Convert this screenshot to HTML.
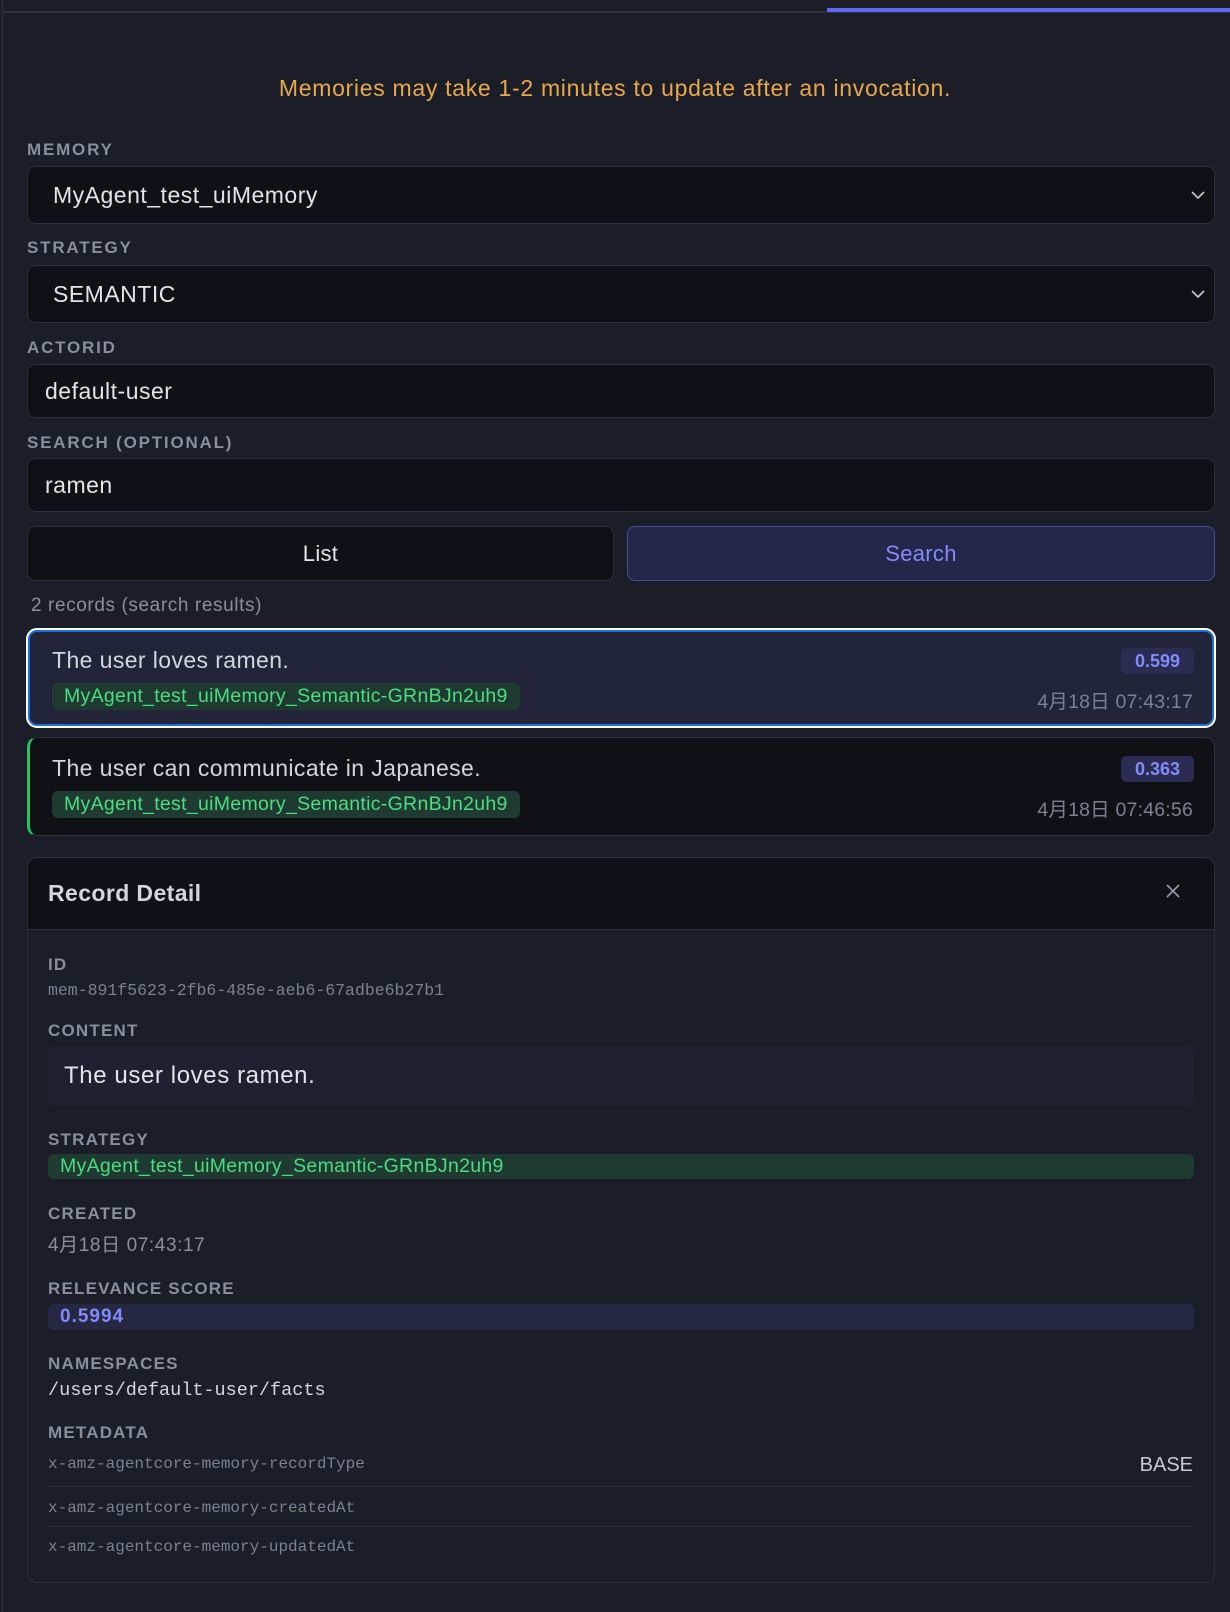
<!DOCTYPE html>
<html><head><meta charset="utf-8"><style>
*{box-sizing:border-box;margin:0;padding:0}
body{width:1230px;height:1612px;background:#1b1d29;font-family:"Liberation Sans","Noto Sans CJK JP",sans-serif;color:#d4d6de;position:relative;overflow:hidden}
.a{position:absolute;white-space:nowrap}
.lbl{position:absolute;left:27px;font-size:17px;font-weight:bold;letter-spacing:1.8px;color:#8b8e9c}
.box{position:absolute;left:27px;width:1188px;background:#0f1117;border:1px solid #2c2f3c;border-radius:8px;font-size:23px;letter-spacing:.5px;color:#e2e4ea;padding-left:17px;display:flex;align-items:center}
.chev{position:absolute;right:8px;top:50%;margin-top:-6px}
.dl{position:absolute;left:48px;font-size:17px;font-weight:bold;letter-spacing:1.2px;color:#8b8e9c}
.mono{font-family:"Liberation Mono","DejaVu Sans Mono",monospace}
.g{background:#1f3a30;color:#4ade80;border-radius:6px;letter-spacing:.3px}
.s{background:#2a2c52;color:#818cf8;border-radius:5px;font-weight:bold}
</style></head><body>
<div class="a" style="left:2px;top:0;width:1px;height:1612px;background:#2c2f3c"></div>
<div class="a" style="left:2px;top:11px;width:1228px;height:2px;background:#2c2f3c"></div>
<div class="a" style="left:827px;top:8px;width:403px;height:4px;background:#6366f1"></div>
<div class="a" style="left:0;width:1230px;top:75px;text-align:center;font-size:23px;letter-spacing:.7px;color:#e8a94a">Memories may take 1-2 minutes to update after an invocation.</div>

<div class="lbl" style="top:140px">MEMORY</div>
<div class="box" style="top:166px;height:58px;padding-left:25px">MyAgent_test_uiMemory<svg class="chev" width="16" height="12" viewBox="0 0 16 12"><path d="M2 3l6 6 6-6" fill="none" stroke="#c8cad2" stroke-width="1.6"/></svg></div>
<div class="lbl" style="top:238px">STRATEGY</div>
<div class="box" style="top:265px;height:58px;padding-left:25px">SEMANTIC<svg class="chev" width="16" height="12" viewBox="0 0 16 12"><path d="M2 3l6 6 6-6" fill="none" stroke="#c8cad2" stroke-width="1.6"/></svg></div>
<div class="lbl" style="top:338px">ACTORID</div>
<div class="box" style="top:364px;height:54px">default-user</div>
<div class="lbl" style="top:433px">SEARCH (OPTIONAL)</div>
<div class="box" style="top:458px;height:54px">ramen</div>

<div class="a" style="left:27px;top:526px;width:587px;height:55px;background:#0f1117;border:1px solid #2c2f3c;border-radius:8px;font-size:22px;letter-spacing:.3px;color:#e2e4ea;display:flex;align-items:center;justify-content:center">List</div>
<div class="a" style="left:627px;top:526px;width:588px;height:55px;background:#25274a;border:1px solid #4a4d8a;border-radius:8px;font-size:22px;letter-spacing:.3px;color:#818cf8;display:flex;align-items:center;justify-content:center">Search</div>

<div class="a" style="left:31px;top:595px;font-size:19px;letter-spacing:.6px;color:#8b8e9c">2 records (search results)</div>

<div class="a" style="left:27px;top:629px;width:1188px;height:98px;background:#22253a;border:3px solid #1d6fdc;outline:2px solid #fff;outline-offset:-1px;border-radius:10px"></div>
<div class="a" style="left:52px;top:647px;font-size:23px;letter-spacing:.4px;color:#d4d6de">The user loves ramen.</div>
<div class="a s" style="left:1121px;top:648px;width:73px;height:26px;font-size:18px;text-align:center;line-height:26px">0.599</div>
<div class="a g" style="left:52px;top:683px;height:27px;padding:0 12px;font-size:19.5px;line-height:27px">MyAgent_test_uiMemory_Semantic-GRnBJn2uh9</div>
<div class="a" style="right:37px;top:685px;font-size:19.5px;letter-spacing:.2px;color:#7d8090">4月18日 07:43:17</div>

<div class="a" style="left:27px;top:737px;width:1188px;height:99px;background:#0f1117;border:1px solid #2c2f3c;border-left:3px solid #22c55e;border-radius:10px"></div>
<div class="a" style="left:52px;top:755px;font-size:23px;letter-spacing:.4px;color:#d4d6de">The user can communicate in Japanese.</div>
<div class="a s" style="left:1121px;top:756px;width:73px;height:26px;font-size:18px;text-align:center;line-height:26px">0.363</div>
<div class="a g" style="left:52px;top:791px;height:27px;padding:0 12px;font-size:19.5px;line-height:27px">MyAgent_test_uiMemory_Semantic-GRnBJn2uh9</div>
<div class="a" style="right:37px;top:793px;font-size:19.5px;letter-spacing:.2px;color:#7d8090">4月18日 07:46:56</div>

<div class="a" style="left:27px;top:857px;width:1188px;height:726px;border:1px solid #2c2f3c;border-radius:10px;overflow:hidden">
 <div style="height:72px;background:#0f1117;border-bottom:1px solid #2c2f3c"></div>
</div>
<div class="a" style="left:48px;top:880px;font-size:23px;letter-spacing:.4px;font-weight:bold;color:#d4d6de">Record Detail</div>
<svg class="a" style="left:1165px;top:883px" width="16" height="16" viewBox="0 0 16 16"><path d="M2 2l12 12M14 2L2 14" stroke="#9a9dab" stroke-width="1.6"/></svg>

<div class="dl" style="top:955px">ID</div>
<div class="a mono" style="left:48px;top:981px;font-size:16.5px;color:#7d8090">mem-891f5623-2fb6-485e-aeb6-67adbe6b27b1</div>
<div class="dl" style="top:1021px">CONTENT</div>
<div class="a" style="left:48px;top:1047px;width:1146px;height:58px;background:#1f2130;border-radius:6px;font-size:24px;letter-spacing:.6px;color:#e2e4ea;padding-left:16px;line-height:58px">The user loves ramen.</div>
<div class="dl" style="top:1130px">STRATEGY</div>
<div class="a g" style="left:48px;top:1154px;width:1146px;height:25px;padding-left:12px;font-size:19.5px;line-height:25px">MyAgent_test_uiMemory_Semantic-GRnBJn2uh9</div>
<div class="dl" style="top:1204px">CREATED</div>
<div class="a" style="left:48px;top:1230px;font-size:19px;letter-spacing:.6px;color:#8b8e9c">4月18日 07:43:17</div>
<div class="dl" style="top:1279px">RELEVANCE SCORE</div>
<div class="a s" style="left:48px;top:1304px;width:1146px;height:26px;padding-left:12px;font-size:19px;letter-spacing:1px;line-height:26px;background:#252743">0.5994</div>
<div class="dl" style="top:1354px">NAMESPACES</div>
<div class="a mono" style="left:48px;top:1380px;font-size:18.5px;color:#d4d6de">/users/default-user/facts</div>
<div class="dl" style="top:1423px">METADATA</div>
<div class="a mono" style="left:48px;top:1455px;font-size:16px;color:#7d8090">x-amz-agentcore-memory-recordType</div>
<div class="a" style="right:37px;top:1454px;font-size:20px;color:#c8cad2">BASE</div>
<div class="a" style="left:48px;top:1486px;width:1146px;height:1px;background:#2a2c38"></div>
<div class="a mono" style="left:48px;top:1499px;font-size:16px;color:#7d8090">x-amz-agentcore-memory-createdAt</div>
<div class="a" style="left:48px;top:1526px;width:1146px;height:1px;background:#2a2c38"></div>
<div class="a mono" style="left:48px;top:1538px;font-size:16px;color:#7d8090">x-amz-agentcore-memory-updatedAt</div>
</body></html>
